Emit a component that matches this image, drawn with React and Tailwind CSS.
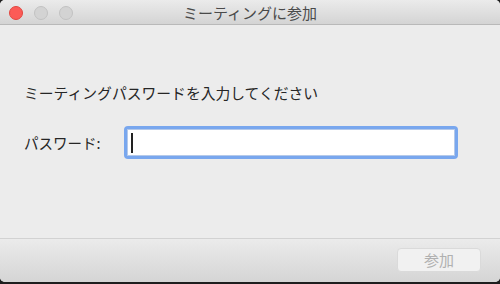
export default function App() {
  const font = { fontFamily: '"Noto Sans CJK JP", "Noto Sans", sans-serif' };
  return (
    <div className="w-[500px] h-[284px] bg-[#1e1e1e] overflow-hidden" style={font}>
      <div className="w-[500px] h-[282px] rounded-[5px] overflow-hidden flex flex-col bg-[#ececec]">
        <div className="relative h-[25px] shrink-0 bg-gradient-to-b from-[#ebebeb] to-[#d4d4d4] border-b border-[#b9b9b9] flex items-center justify-center">
          <div className="absolute left-[9px] top-[6px] flex gap-[11px]">
            <div className="w-[14px] h-[14px] rounded-full bg-[#fc5b57] border border-[#e2463f]" />
            <div className="w-[14px] h-[14px] rounded-full bg-[#d3d3d3] border border-[#c2c2c2]" />
            <div className="w-[14px] h-[14px] rounded-full bg-[#d3d3d3] border border-[#c2c2c2]" />
          </div>
          <span className="text-[15px] leading-none text-[#4a4a4a] mt-[1px]">ミーティングに参加</span>
        </div>
        <div className="flex-1 flex flex-col pl-[24px] pt-[60px]">
          <div className="text-[14.8px] leading-[16px] text-[#262626]">ミーティングパスワードを入力してください</div>
          <div className="flex items-center mt-[25px]">
            <span className="w-[100px] text-[14.5px] text-[#262626]">パスワード:</span>
            <div className="w-[334px] h-[33px] rounded-[4px] bg-[#79a7ee] p-[3px]">
              <div className="w-full h-full bg-white border border-[#b4c9ea] flex items-center pl-[3px]">
                <div className="w-[2px] h-[20px] bg-[#222]" />
              </div>
            </div>
          </div>
        </div>
        <div className="h-[44px] shrink-0 border-t border-[#d2d2d2] bg-gradient-to-b from-[#ebebeb] to-[#d5d5d5] flex items-start justify-end pr-[19px] pt-[9px]">
          <div className="w-[84px] h-[24px] rounded-[4px] bg-[#f1f1f1] border border-[#dadada] flex items-center justify-center text-[15px] text-[#b0b0b0]">
            参加
          </div>
        </div>
      </div>
    </div>
  );
}
